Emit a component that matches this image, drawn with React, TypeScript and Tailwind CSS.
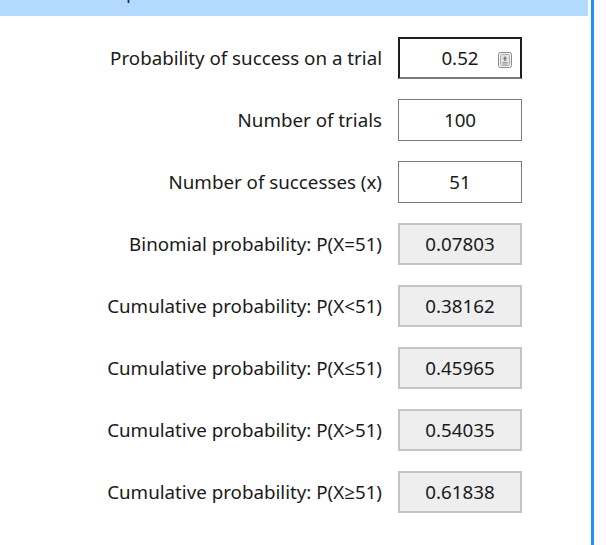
import React from 'react'

const font = { fontFamily: '"Noto Sans", "Open Sans", sans-serif' }

type Row = { label: string; value: string; kind: 'focus' | 'input' | 'output' }

const rows: Row[] = [
  { label: 'Probability of success on a trial', value: '0.52', kind: 'focus' },
  { label: 'Number of trials', value: '100', kind: 'input' },
  { label: 'Number of successes (x)', value: '51', kind: 'input' },
  { label: 'Binomial probability: P(X=51)', value: '0.07803', kind: 'output' },
  { label: 'Cumulative probability: P(X<51)', value: '0.38162', kind: 'output' },
  { label: 'Cumulative probability: P(X\u226451)', value: '0.45965', kind: 'output' },
  { label: 'Cumulative probability: P(X>51)', value: '0.54035', kind: 'output' },
  { label: 'Cumulative probability: P(X\u226551)', value: '0.61838', kind: 'output' },
]

function SpinIcon() {
  return (
    <svg width="14" height="16" viewBox="0 0 14 16" className="absolute right-[8px] top-[13px]">
      <rect x="0.5" y="0.5" width="13" height="15" rx="2" fill="#f4f4f4" stroke="#8a8a8a" />
      <rect x="2.5" y="2.5" width="9" height="11" rx="1" fill="#e2e2e2" stroke="#b0b0b0" />
      <path d="M7 4 L9 7 L5 7 Z" fill="#7a7a7a" />
      <rect x="6.2" y="7" width="1.6" height="2" fill="#7a7a7a" />
      <rect x="4.5" y="10" width="5" height="1" fill="#9a9a9a" />
      <rect x="4.5" y="11.5" width="5" height="1" fill="#9a9a9a" />
    </svg>
  )
}

function ValueBox({ row }: { row: Row }) {
  if (row.kind === 'output') {
    return (
      <div className="w-[124px] h-[42px] flex items-center justify-center bg-[#eeeeee] border-2 border-[#c4c4c4] text-[#1a1a1a]">
        {row.value}
      </div>
    )
  }
  if (row.kind === 'focus') {
    return (
      <div className="relative w-[124px] h-[42px] flex items-center justify-center bg-white border-2 border-[#1f1f1f] border-b-[#7a7a7a] text-[#1a1a1a]">
        {row.value}
        <SpinIcon />
      </div>
    )
  }
  return (
    <div className="w-[124px] h-[42px] flex items-center justify-center bg-white border border-[#7a7a7a] text-[#1a1a1a]">
      {row.value}
    </div>
  )
}

export default function App() {
  return (
    <div className="w-[606px] h-[545px] bg-white flex overflow-hidden text-[18.75px]" style={font}>
      <div className="w-[588px] flex flex-col">
        <div className="h-[16px] bg-[#b3d9ff] overflow-hidden">
          <div className="pl-[108px] -mt-[21px] text-[#1a237e] leading-[26px]">Inputs</div>
        </div>
        <div className="flex flex-col gap-[20px] pt-[21px]">
          {rows.map((row) => (
            <div key={row.label} className="flex items-center">
              <div className="w-[382px] text-right text-[#1a1a1a] whitespace-nowrap">{row.label}</div>
              <div className="ml-[16px]">
                <ValueBox row={row} />
              </div>
            </div>
          ))}
        </div>
      </div>
      <div className="w-[3px] ml-[3px] bg-[#1e8fff]" />
      <div className="flex-1 bg-[#fdfdfd]" />
    </div>
  )
}
